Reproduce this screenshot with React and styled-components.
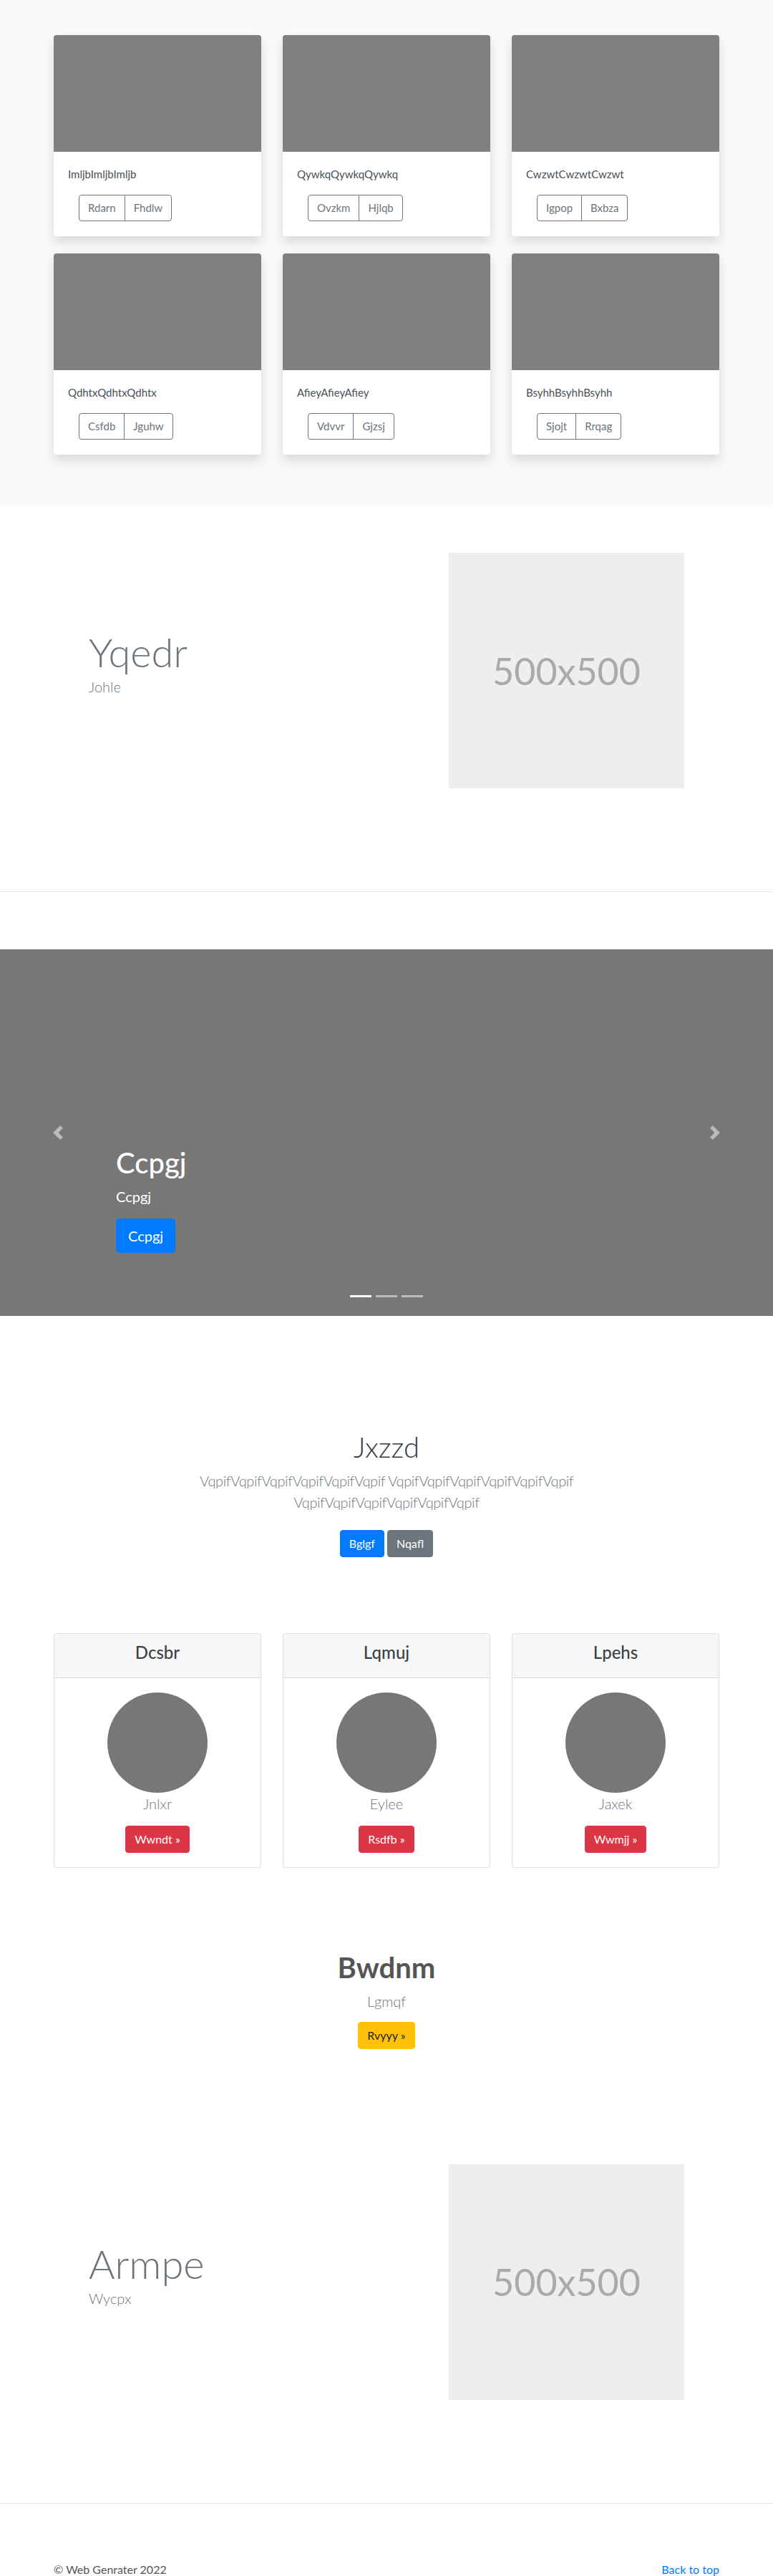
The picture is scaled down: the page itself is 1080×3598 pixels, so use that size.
import React from "react";
import styled, { createGlobalStyle, css } from "styled-components";

const GlobalStyle = createGlobalStyle`
	* {
		box-sizing: border-box;
	}
	body {
		margin: 0;
		font-family: Lato, "Open Sans", "Liberation Sans", sans-serif;
		font-size: 16px;
		line-height: 1.5;
		color: #212529;
		background: #fff;
	}
`;

const variants = {
	primary: css`
		background: #007bff;
		border-color: #007bff;
		color: #fff;
	`,
	secondary: css`
		background: #6c757d;
		border-color: #6c757d;
		color: #fff;
	`,
	danger: css`
		background: #dc3545;
		border-color: #dc3545;
		color: #fff;
	`,
	warning: css`
		background: #ffc107;
		border-color: #ffc107;
		color: #212529;
	`,
};

const Button = styled.a`
	display: inline-block;
	vertical-align: top;
	font-size: ${(props) => (props.$lg ? "20px" : "16px")};
	line-height: 1.5;
	padding: ${(props) => (props.$lg ? "8px 16px" : "6px 12px")};
	border: 1px solid transparent;
	border-radius: ${(props) => (props.$lg ? "4.8px" : "4px")};
	text-decoration: none;
	cursor: pointer;
	${(props) => variants[props.$variant || "primary"]}
`;

const Container = styled.div`
	width: 930px;
	margin: 0 auto;
`;

/* album */
const Album = styled.section`
	background: #f8f9fa;
	padding: 49px 0 48px;
`;

const CardGrid = styled.div`
	display: grid;
	grid-template-columns: repeat(3, 290px);
	column-gap: 30px;
	row-gap: 24px;
	padding-bottom: 24px;
`;

const AlbumCard = styled.div`
	background: #fff;
	border-radius: 4px;
	overflow: hidden;
	box-shadow: 0 8px 16px rgba(0, 0, 0, 0.13);
`;

const Thumb = styled.div`
	height: 163px;
	background: #808080;
`;

const CardBody = styled.div`
	padding: 20px 20px 21px;
`;

const CardText = styled.p`
	margin: 0 0 18px;
	font-size: 15px;
	line-height: 22px;
	color: #495057;
`;

const BtnGroup = styled.div`
	display: inline-flex;
	margin-left: 15px;
`;

const OutlineBtn = styled.button`
	font-family: inherit;
	font-size: 15px;
	line-height: 23px;
	padding: 6px 12px;
	background: transparent;
	color: #6c757d;
	border: 1px solid #6c757d;
	&:first-child {
		border-radius: 4px 0 0 4px;
	}
	&:last-child {
		border-radius: 0 4px 4px 0;
		margin-left: -1px;
	}
`;

/* featurette */
const Featurette = styled.section`
	padding: ${(props) => props.$top}px 0 144px;
`;

const FeatRow = styled(Container)`
	display: flex;
	align-items: center;
	justify-content: space-between;
	padding: 0 49px;
`;

const FeatText = styled.div`
	padding-bottom: 6px;
`;

const FeatTitle = styled.h2`
	margin: 0;
	font-size: 56px;
	font-weight: 300;
	line-height: 1.2;
	color: #6c757d;
`;

const FeatLead = styled.p`
	margin: 0 0 16px;
	font-size: 20px;
	font-weight: 300;
	line-height: 1.5;
	color: #6c757d;
`;

const Placeholder = styled.div`
	width: 329px;
	height: 329px;
	background: #eee;
	color: #aaa;
	font-size: 52px;
	display: flex;
	align-items: center;
	justify-content: center;
`;

const Divider = styled.hr`
	margin: 0;
	border: 0;
	border-top: 1px solid #e5e5e5;
`;

/* carousel */
const Carousel = styled.section`
	position: relative;
	margin-top: 80px;
	height: 512px;
	background: #777;
	display: flex;
	flex-direction: column;
	justify-content: flex-end;
	align-items: flex-start;
	padding: 0 0 88px 162px;
`;

const CaptionTitle = styled.h1`
	margin: 0 0 8px;
	font-size: 40px;
	font-weight: 500;
	line-height: 1.2;
	color: #fff;
`;

const CaptionText = styled.p`
	margin: 0 0 16px;
	font-size: 20px;
	line-height: 1.5;
	color: #fff;
`;

const Control = styled.a`
	position: absolute;
	top: 0;
	bottom: 0;
	${(props) => (props.$side === "prev" ? "left: 0;" : "right: 0;")}
	width: 15%;
	display: flex;
	align-items: center;
	justify-content: center;
	opacity: 0.5;
`;

const Indicators = styled.ol`
	position: absolute;
	left: 0;
	right: 0;
	bottom: 26px;
	margin: 0;
	padding: 0;
	list-style: none;
	display: flex;
	justify-content: center;
	gap: 6px;
`;

const Indicator = styled.li`
	width: 30px;
	height: 3px;
	background: #fff;
	opacity: ${(props) => (props.$active ? 1 : 0.5)};
`;

/* jumbotron */
const Jumbo = styled.section`
	padding-top: 159px;
	text-align: center;
`;

const JumboTitle = styled.h1`
	margin: 0 0 8px;
	font-size: 40px;
	font-weight: 300;
	line-height: 1.2;
	color: #343a40;
`;

const JumboLead = styled.p`
	max-width: 610px;
	margin: 0 auto 16px;
	font-size: 20px;
	font-weight: 300;
	line-height: 1.5;
	letter-spacing: -0.4px;
	color: #6c757d;
`;

const ButtonRow = styled.div`
	display: flex;
	justify-content: center;
	gap: 4px;
	padding-top: 8px;
`;

/* pricing */
const PricingGrid = styled(Container)`
	display: grid;
	grid-template-columns: repeat(3, 290px);
	column-gap: 30px;
	margin-top: 106px;
`;

const PriceCard = styled.div`
	border: 1px solid rgba(0, 0, 0, 0.125);
	border-radius: 4px;
	text-align: center;
	overflow: hidden;
`;

const PriceHeader = styled.div`
	background: rgba(0, 0, 0, 0.03);
	border-bottom: 1px solid rgba(0, 0, 0, 0.125);
	padding: 12px 20px;
`;

const PriceTitle = styled.h4`
	margin: 0 0 8px;
	font-size: 24px;
	font-weight: 500;
	line-height: 1.2;
	color: #3d4246;
`;

const PriceBody = styled.div`
	padding: 20px;
`;

const Avatar = styled.div`
	width: 140px;
	height: 140px;
	border-radius: 50%;
	background: #777;
	margin: 0 auto;
`;

const Lead = styled.p`
	margin: 0 0 ${(props) => props.$mb ?? 16}px;
	font-size: 20px;
	font-weight: 300;
	line-height: 1.5;
	color: #6c757d;
`;

/* promo */
const Promo = styled.section`
	padding-top: 115px;
	text-align: center;
`;

const PromoTitle = styled.h1`
	margin: 0 0 8px;
	font-size: 40px;
	font-weight: 700;
	line-height: 1.2;
	color: #555;
`;

/* footer */
const Footer = styled.footer`
	padding: 80px 0 40px;
`;

const FooterRow = styled(Container)`
	display: flex;
	justify-content: space-between;
	color: #555;
`;

const TopLink = styled.a`
	color: #007bff;
	text-decoration: none;
`;

const albumCards = [
	{ title: "ImljbImljbImljb", a: "Rdarn", b: "Fhdlw" },
	{ title: "QywkqQywkqQywkq", a: "Ovzkm", b: "Hjlqb" },
	{ title: "CwzwtCwzwtCwzwt", a: "Igpop", b: "Bxbza" },
	{ title: "QdhtxQdhtxQdhtx", a: "Csfdb", b: "Jguhw" },
	{ title: "AfieyAfieyAfiey", a: "Vdvvr", b: "Gjzsj" },
	{ title: "BsyhhBsyhhBsyhh", a: "Sjojt", b: "Rrqag" },
];

const pricing = [
	{ head: "Dcsbr", name: "Jnlxr", btn: "Wwndt" },
	{ head: "Lqmuj", name: "Eylee", btn: "Rsdfb" },
	{ head: "Lpehs", name: "Jaxek", btn: "Wwmjj" },
];

const Chevron = ({ dir }) => (
	<svg width="20" height="20" viewBox="0 0 8 8" fill="#fff">
		{dir === "prev" ? (
			<path d="M5.25 0l-4 4 4 4 1.5-1.5L4.25 4l2.5-2.5L5.25 0z" />
		) : (
			<path d="M2.75 0l-1.5 1.5L3.75 4l-2.5 2.5L2.75 8l4-4-4-4z" />
		)}
	</svg>
);

const FeatureBlock = ({ title, lead, top }) => (
	<Featurette $top={top}>
		<FeatRow>
			<FeatText>
				<FeatTitle>{title}</FeatTitle>
				<FeatLead>{lead}</FeatLead>
			</FeatText>
			<Placeholder>500x500</Placeholder>
		</FeatRow>
	</Featurette>
);

export default function App() {
	const word = "VqpifVqpifVqpifVqpifVqpifVqpif";
	return (
		<>
			<GlobalStyle />
			<Album>
				<Container>
					<CardGrid>
						{albumCards.map((c) => (
							<AlbumCard key={c.title}>
								<Thumb />
								<CardBody>
									<CardText>{c.title}</CardText>
									<BtnGroup>
										<OutlineBtn>{c.a}</OutlineBtn>
										<OutlineBtn>{c.b}</OutlineBtn>
									</BtnGroup>
								</CardBody>
							</AlbumCard>
						))}
					</CardGrid>
				</Container>
			</Album>

			<FeatureBlock title="Yqedr" lead="Johle" top={65} />
			<Divider />

			<Carousel>
				<CaptionTitle>Ccpgj</CaptionTitle>
				<CaptionText>Ccpgj</CaptionText>
				<Button $lg $variant="primary">
					Ccpgj
				</Button>
				<Control $side="prev">
					<Chevron dir="prev" />
				</Control>
				<Control $side="next">
					<Chevron dir="next" />
				</Control>
				<Indicators>
					<Indicator $active />
					<Indicator />
					<Indicator />
				</Indicators>
			</Carousel>

			<Jumbo>
				<JumboTitle>Jxzzd</JumboTitle>
				<JumboLead>
					{word} {word} {word}
				</JumboLead>
				<ButtonRow>
					<Button $variant="primary">Bglgf</Button>
					<Button $variant="secondary">Nqafl</Button>
				</ButtonRow>
			</Jumbo>

			<PricingGrid>
				{pricing.map((p) => (
					<PriceCard key={p.head}>
						<PriceHeader>
							<PriceTitle>{p.head}</PriceTitle>
						</PriceHeader>
						<PriceBody>
							<Avatar />
							<Lead>{p.name}</Lead>
							<Button $variant="danger">{p.btn} »</Button>
						</PriceBody>
					</PriceCard>
				))}
			</PricingGrid>

			<Promo>
				<PromoTitle>Bwdnm</PromoTitle>
				<Lead $mb={14}>Lgmqf</Lead>
				<Button $variant="warning">Rvyyy »</Button>
			</Promo>

			<FeatureBlock title="Armpe" lead="Wycpx" top={161} />
			<Divider />

			<Footer>
				<FooterRow>
					<span>© Web Genrater 2022</span>
					<TopLink href="#">Back to top</TopLink>
				</FooterRow>
			</Footer>
		</>
	);
}
